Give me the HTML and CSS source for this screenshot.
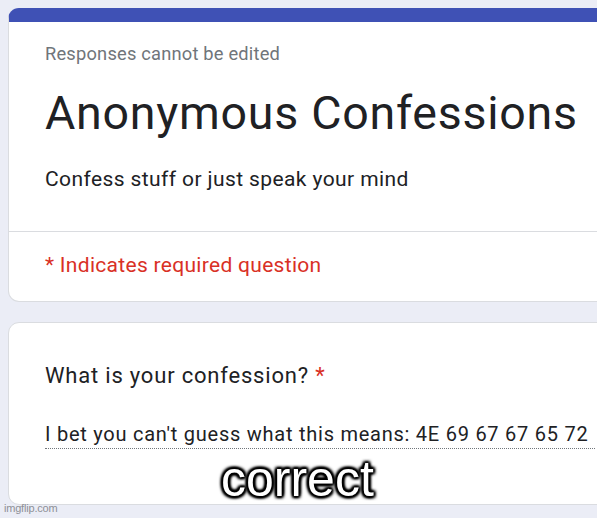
FILE: index.html
```html
<!DOCTYPE html>
<html>
<head>
<meta charset="utf-8">
<link rel="stylesheet" href="styles.css">
</head>
<body>
<div class="page">
  <section class="card card-head">
    <div class="head-main">
      <p class="note">Responses cannot be edited</p>
      <h1 class="title">Anonymous Confessions</h1>
      <p class="desc">Confess stuff or just speak your mind</p>
    </div>
    <div class="head-foot">
      <p class="required">* Indicates required question</p>
    </div>
  </section>
  <section class="card card-question">
    <p class="question">What is your confession? <span class="star">*</span></p>
    <p class="answer">I bet you can't guess what this means: 4E 69 67 67 65 72</p>
  </section>
  <div class="caption">correct</div>
  <div class="watermark">imgflip.com</div>
</div>
</body>
</html>
```
FILE: styles.css
```css
html, body {
  margin: 0;
  padding: 0;
  background: #ebedf6;
  overflow: hidden;
}
body {
  width: 597px;
  height: 518px;
  font-family: Roboto, "Liberation Sans", sans-serif;
}
.page {
  position: relative;
  width: 597px;
  height: 518px;
  padding: 8px 0 0 8px;
  box-sizing: border-box;
  display: flex;
  flex-direction: column;
  gap: 20px;
}
.card {
  width: 660px;
  background: #ffffff;
  border: 1px solid #dadce0;
  border-radius: 11px;
  box-sizing: border-box;
}
.card-head {
  border-top: 14px solid #3f51b5;
  height: 294px;
}
.head-main {
  padding: 19px 0 0 36px;
  height: 210px;
  box-sizing: border-box;
  border-bottom: 1px solid #dadce0;
}
.note {
  margin: 0;
  font-size: 18.3px;
  line-height: 26px;
  color: #70757a;
  letter-spacing: 0.2px;
}
.title {
  margin: 19px 0 0 0;
  font-weight: 400;
  font-size: 46.5px;
  line-height: 54px;
  letter-spacing: 0.75px;
  color: #202124;
}
.desc {
  margin: 25px 0 0 0;
  font-size: 21px;
  line-height: 28px;
  letter-spacing: 0.4px;
  color: #202124;
}
.head-foot {
  padding: 19px 0 0 36px;
}
.required {
  margin: 0;
  font-size: 21px;
  line-height: 28px;
  letter-spacing: 0.3px;
  color: #d93025;
}
.card-question {
  height: 183px;
  padding: 38px 0 0 36px;
}
.question {
  margin: 0;
  font-size: 22px;
  line-height: 30px;
  letter-spacing: 0.8px;
  color: #202124;
}
.star {
  color: #d93025;
}
.answer {
  margin: 29px 0 0 0;
  width: 550px;
  font-size: 20px;
  line-height: 28px;
  letter-spacing: 0.75px;
  white-space: nowrap;
  color: #202124;
  border-bottom: 1px dotted #70757a;
}
.caption {
  position: absolute;
  left: 221px;
  top: 451px;
  font-family: "Liberation Sans", Arial, sans-serif;
  font-size: 50px;
  line-height: 56px;
  color: #ffffff;
  text-shadow: 2px 0 2px #000, -2px 0 2px #000, 0 2px 2px #000, 0 -2px 2px #000,
    2px 2px 3px #000, -2px -2px 3px #000, 2px -2px 3px #000, -2px 2px 3px #000;
}
.watermark {
  position: absolute;
  left: 4px;
  top: 502px;
  font-family: "Liberation Sans", Arial, sans-serif;
  font-size: 11px;
  letter-spacing: -0.2px;
  color: #8e9096;
}
```
